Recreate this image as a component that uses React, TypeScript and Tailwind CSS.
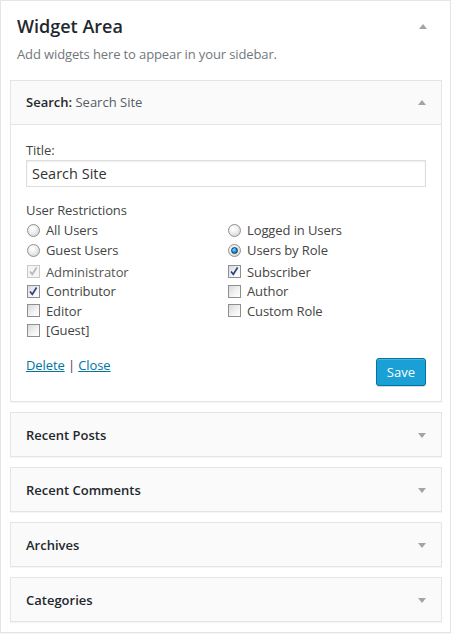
import React from "react";

const Tri = ({ down = false }: { down?: boolean }) => (
  <svg width="8" height="5" viewBox="0 0 8 5" className="block">
    {down ? <path d="M0 0 L8 0 L4 5 Z" fill="#a0a5aa" /> : <path d="M0 5 L4 0 L8 5 Z" fill="#a0a5aa" />}
  </svg>
);

const Radio = ({ checked = false, label }: { checked?: boolean; label: string }) => (
  <div className="flex h-[20px] items-center">
    <span className="ml-[1px] mt-[1px] flex h-[13px] w-[13px] items-center justify-center rounded-full border border-[#8f9191] bg-[radial-gradient(circle_at_40%_35%,#ffffff_10%,#e4e4e4_60%,#cfcfcf_100%)]">
      {checked && (
        <span className="h-[7px] w-[7px] rounded-full border border-[#0d3a66] bg-[radial-gradient(circle_at_40%_35%,#8fdcff_0%,#2a9de0_45%,#0b4b8c_100%)]" />
      )}
    </span>
    <span className="ml-[6px]">{label}</span>
  </div>
);

const Check = ({ checked = false, disabled = false, label }: { checked?: boolean; disabled?: boolean; label: string }) => (
  <div className="flex h-[19.5px] items-center">
    <span
      className={
        disabled
          ? "relative ml-[1px] h-[13px] w-[13px] border border-[#c9c9c9] bg-[#f4f4f4]"
          : "relative ml-[1px] h-[13px] w-[13px] border border-[#8f8f8f] bg-[linear-gradient(135deg,#d9d9d9_0%,#f4f4f4_60%,#ffffff_100%)]"
      }
    >
      {checked && (
        <svg width="11" height="11" viewBox="0 0 11 11" className="absolute left-0 top-0">
          <path
            d="M2 5.5 L4.3 8.3 L8.6 1.5"
            fill="none"
            stroke={disabled ? "#b5b5b5" : "#2c3f87"}
            strokeWidth="1.6"
          />
        </svg>
      )}
    </span>
    <span className={disabled ? "ml-[6px] text-[#555]" : "ml-[6px]"}>{label}</span>
  </div>
);

const Collapsed = ({ title }: { title: string }) => (
  <div className="flex items-center justify-between border border-[#e5e5e5] bg-[#fafafa] px-[15px] pb-[14px] pt-[16px] shadow-[0_1px_1px_rgba(0,0,0,0.04)]">
    <span className="text-[13px] font-semibold leading-[13px] text-[#23282d]">{title}</span>
    <Tri down />
  </div>
);

export default function App() {
  return (
    <div className="h-[634px] w-[452px] bg-white font-['Open_Sans','Noto_Sans',sans-serif]">
      <div className="w-[451px] border border-[#e5e5e5] bg-white pb-[10px] shadow-[0_1px_1px_rgba(0,0,0,0.04)]">
        <div className="flex items-center justify-between pl-[16px] pr-[23px] pt-[13px]">
          <h2 className="text-[18px] font-semibold leading-[24px] text-[#23282d]">Widget Area</h2>
          <Tri />
        </div>
        <p className="mt-[6px] pl-[16px] text-[13px] leading-[20px] tracking-[-0.12px] text-[#72777c]">
          Add widgets here to appear in your sidebar.
        </p>
        <div className="ml-[9px] mr-[8px] mt-[16px] flex flex-col gap-[10px]">
          <div className="border border-[#e5e5e5] bg-white shadow-[0_1px_1px_rgba(0,0,0,0.04)]">
            <div className="flex items-center justify-between border-b border-[#e5e5e5] bg-[#fafafa] px-[15px] py-[15px]">
              <span className="text-[13px] leading-[13px]">
                <span className="font-semibold text-[#23282d]">Search:</span>
                <span className="text-[#555d66]"> Search Site</span>
              </span>
              <Tri />
            </div>
            <div className="px-[15px] pb-[15px] pt-[15px] text-[13px] leading-[20px] tracking-[-0.1px] text-[#444]">
              <div>Title:</div>
              <input
                readOnly
                value="Search Site"
                className="block h-[27px] w-full border border-[#dddddd] bg-white px-[5px] text-[14.5px] leading-[25px] tracking-normal text-[#333] shadow-[inset_0_1px_2px_rgba(0,0,0,0.07)] outline-none"
              />
              <div className="mt-[13px]">User Restrictions</div>
              <div className="grid grid-cols-[201px_1fr]">
                <Radio label="All Users" />
                <Radio label="Logged in Users" />
                <Radio label="Guest Users" />
                <Radio checked label="Users by Role" />
              </div>
              <div className="mt-[2px] grid grid-cols-[201px_1fr]">
                <Check checked disabled label="Administrator" />
                <Check checked label="Subscriber" />
                <Check checked label="Contributor" />
                <Check label="Author" />
                <Check label="Editor" />
                <Check label="Custom Role" />
                <Check label="[Guest]" />
              </div>
              <div className="mt-[15px] flex items-start justify-between">
                <div>
                  <a href="#" className="text-[#0074a2] underline">Delete</a>
                  <span className="text-[#444]"> | </span>
                  <a href="#" className="text-[#0074a2] underline">Close</a>
                </div>
                <button className="mt-[3px] h-[28px] rounded-[3px] border border-[#0074a2] bg-[#1aa0d4] px-[10px] text-[13px] leading-[26px] tracking-normal text-white shadow-[inset_0_1px_0_rgba(120,200,230,0.5),0_1px_0_rgba(0,0,0,0.15)]">
                  Save
                </button>
              </div>
            </div>
          </div>
          <Collapsed title="Recent Posts" />
          <Collapsed title="Recent Comments" />
          <Collapsed title="Archives" />
          <Collapsed title="Categories" />
        </div>
      </div>
    </div>
  );
}
